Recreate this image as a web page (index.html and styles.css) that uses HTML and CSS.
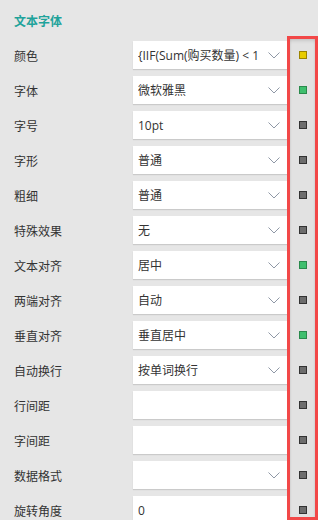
FILE: index.html
```html
<!DOCTYPE html>
<html lang="zh-CN">
<head>
    <meta charset="UTF-8">
    <meta name="viewport" content="width=device-width, initial-scale=1.0">
    <title>文本字体</title>
    <link rel="stylesheet" href="styles.css">
</head>
<body>
    <div class="panel">
        <div class="panel-title">文本字体</div>

        <div class="panel-body">
            <div class="form">
                <div class="row">
                    <label>颜色</label>
                    <div class="field select"><span class="value">{IIF(Sum(购买数量) &lt; 1</span><svg class="chevron" viewBox="0 0 12 7"><path d="M0.5 0.5 L6 6 L11.5 0.5"/></svg></div>
                </div>
                <div class="row">
                    <label>字体</label>
                    <div class="field select"><span class="value">微软雅黑</span><svg class="chevron" viewBox="0 0 12 7"><path d="M0.5 0.5 L6 6 L11.5 0.5"/></svg></div>
                </div>
                <div class="row">
                    <label>字号</label>
                    <div class="field select"><span class="value">10pt</span><svg class="chevron" viewBox="0 0 12 7"><path d="M0.5 0.5 L6 6 L11.5 0.5"/></svg></div>
                </div>
                <div class="row">
                    <label>字形</label>
                    <div class="field select"><span class="value">普通</span><svg class="chevron" viewBox="0 0 12 7"><path d="M0.5 0.5 L6 6 L11.5 0.5"/></svg></div>
                </div>
                <div class="row">
                    <label>粗细</label>
                    <div class="field select"><span class="value">普通</span><svg class="chevron" viewBox="0 0 12 7"><path d="M0.5 0.5 L6 6 L11.5 0.5"/></svg></div>
                </div>
                <div class="row">
                    <label>特殊效果</label>
                    <div class="field select"><span class="value">无</span><svg class="chevron" viewBox="0 0 12 7"><path d="M0.5 0.5 L6 6 L11.5 0.5"/></svg></div>
                </div>
                <div class="row">
                    <label>文本对齐</label>
                    <div class="field select"><span class="value">居中</span><svg class="chevron" viewBox="0 0 12 7"><path d="M0.5 0.5 L6 6 L11.5 0.5"/></svg></div>
                </div>
                <div class="row">
                    <label>两端对齐</label>
                    <div class="field select"><span class="value">自动</span><svg class="chevron" viewBox="0 0 12 7"><path d="M0.5 0.5 L6 6 L11.5 0.5"/></svg></div>
                </div>
                <div class="row">
                    <label>垂直对齐</label>
                    <div class="field select"><span class="value">垂直居中</span><svg class="chevron" viewBox="0 0 12 7"><path d="M0.5 0.5 L6 6 L11.5 0.5"/></svg></div>
                </div>
                <div class="row">
                    <label>自动换行</label>
                    <div class="field select"><span class="value">按单词换行</span><svg class="chevron" viewBox="0 0 12 7"><path d="M0.5 0.5 L6 6 L11.5 0.5"/></svg></div>
                </div>
                <div class="row">
                    <label>行间距</label>
                    <div class="field"><span class="value"></span></div>
                </div>
                <div class="row">
                    <label>字间距</label>
                    <div class="field"><span class="value"></span></div>
                </div>
                <div class="row">
                    <label>数据格式</label>
                    <div class="field select"><span class="value"></span><svg class="chevron" viewBox="0 0 12 7"><path d="M0.5 0.5 L6 6 L11.5 0.5"/></svg></div>
                </div>
                <div class="row">
                    <label>旋转角度</label>
                    <div class="field"><span class="value">0</span></div>
                </div>
            </div>

            <div class="markers">
                <div class="marker"><span class="dot dot-yellow"></span></div>
                <div class="marker"><span class="dot dot-green"></span></div>
                <div class="marker"><span class="dot"></span></div>
                <div class="marker"><span class="dot"></span></div>
                <div class="marker"><span class="dot"></span></div>
                <div class="marker"><span class="dot"></span></div>
                <div class="marker"><span class="dot dot-green"></span></div>
                <div class="marker"><span class="dot"></span></div>
                <div class="marker"><span class="dot dot-green"></span></div>
                <div class="marker"><span class="dot"></span></div>
                <div class="marker"><span class="dot"></span></div>
                <div class="marker"><span class="dot"></span></div>
                <div class="marker"><span class="dot"></span></div>
                <div class="marker"><span class="dot"></span></div>
            </div>
        </div>
    </div>
</body>
</html>
```

FILE: styles.css
```css
html, body {
    margin: 0;
    padding: 0;
    height: 520px;
    overflow: hidden;
}
body {
    font-family: 'Open Sans', 'Noto Sans CJK SC', sans-serif;
    font-size: 12px;
    color: #333;
    background-color: #e6e6e6;
}
.panel {
    width: 318px;
}
.panel-title {
    box-sizing: border-box;
    height: 36px;
    padding: 4px 0 0 14px;
    display: flex;
    align-items: center;
    color: #1fa39b;
    font-weight: bold;
    font-family: 'Noto Sans CJK SC', sans-serif;
}
.panel-body {
    display: flex;
    align-items: flex-start;
}
.form {
    width: 287px;
    padding-top: 5px;
    display: flex;
    flex-direction: column;
    gap: 7px;
}
.row {
    display: flex;
    align-items: center;
    height: 28px;
}
.row label {
    width: 119px;
    padding-left: 14px;
    font-family: 'Noto Sans CJK SC', sans-serif;
}
.field {
    box-sizing: border-box;
    width: 154px;
    height: 28px;
    background-color: #fff;
    box-shadow: 0 1px 1px rgba(0, 0, 0, 0.12);
    display: flex;
    align-items: center;
    padding: 0 7px 0 5px;
}
.field .value {
    flex: 1;
    white-space: nowrap;
    overflow: hidden;
}
.chevron {
    width: 12px;
    height: 7px;
    margin-left: 6px;
    flex-shrink: 0;
}
.chevron path {
    fill: none;
    stroke: #8f98a6;
    stroke-width: 1;
}
.markers {
    box-sizing: border-box;
    width: 31px;
    height: 484px;
    overflow: hidden;
    border: 3px solid #f24848;
    border-bottom-width: 3px;
    background-color: #e2e2e2;
    box-shadow: inset 0 4px 4px -3px rgba(0, 0, 0, 0.18), inset 2px 0 2px -1px rgba(0, 0, 0, 0.06), inset -2px 0 2px -1px rgba(0, 0, 0, 0.06);
    padding-top: 2px;
    display: flex;
    flex-direction: column;
    gap: 7px;
}
.marker {
    flex-shrink: 0;
    height: 28px;
    display: flex;
    align-items: center;
    justify-content: center;
}
.dot {
    box-sizing: border-box;
    width: 8px;
    height: 8px;
    background-color: #6d6d6d;
    border: 1px solid #333;
}
.dot-yellow {
    background-color: #e8cc00;
    border-color: #9c8400;
}
.dot-green {
    background-color: #3fbf6e;
    border-color: #2a8a4c;
}
```
